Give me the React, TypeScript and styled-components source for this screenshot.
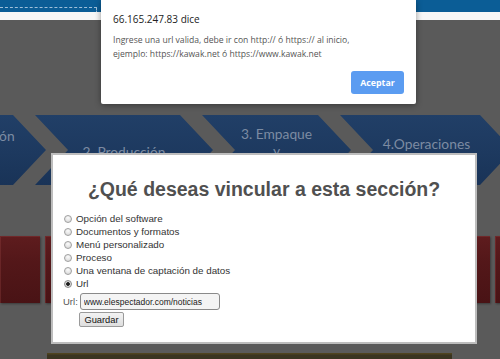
import React from "react";
import styled, { createGlobalStyle } from "styled-components";

const GlobalStyle = createGlobalStyle`
  html, body {
    margin: 0;
    padding: 0;
    background: #5a5a5a;
  }
  body {
    font-family: "Liberation Sans", Arial, sans-serif;
    overflow: hidden;
  }
`;

const Page = styled.div`
  position: relative;
  width: 500px;
  height: 359px;
  overflow: hidden;
  background: #5a5a5a;
  display: flex;
  flex-direction: column;
`;

const TopBar = styled.div`
  height: 13px;
  box-sizing: border-box;
  padding-top: 7px;
  background: #0b5d96;
  overflow: hidden;
`;

const FocusBox = styled.div`
  width: 97px;
  height: 10px;
  box-sizing: border-box;
  border-top: 1px dashed rgba(210, 225, 240, 0.75);
  border-right: 1px dashed rgba(210, 225, 240, 0.75);
`;

const WhiteStrip = styled.div`
  height: 9px;
  background: #f7f7f7;
`;

const Stage = styled.div`
  display: flex;
  flex-direction: column;
  padding-top: 95px;
`;

const ChevronRow = styled.div`
  display: flex;
  height: 70px;
`;

const Chevron = styled.div<{ $w: number; $pt: number }>`
  flex-shrink: 0;
  width: ${(p) => p.$w}px;
  margin-left: -11px;
  box-sizing: border-box;
  padding-top: ${(p) => p.$pt}px;
  background: linear-gradient(180deg, #213f67 0%, #1d395f 55%, #193357 100%);
  clip-path: polygon(
    0 0,
    calc(100% - 33px) 0,
    100% 50%,
    calc(100% - 33px) 100%,
    0 100%,
    33px 50%
  );
  color: #7c8ba2;
  font-family: Lato, "Open Sans", sans-serif;
  font-size: 13.8px;
  line-height: 17px;
  text-align: center;
  white-space: nowrap;

  &:first-child {
    margin-left: -94px;
  }
`;

const RedRow = styled.div`
  display: flex;
  gap: 5px;
  height: 67px;
  margin-top: 51px;
`;

const RedBlock = styled.div<{ $w: number }>`
  flex-shrink: 0;
  width: ${(p) => p.$w}px;
  background: linear-gradient(180deg, #5e1c1e 0%, #531719 40%, #491315 100%);
  box-shadow: inset 1px 1px 0 rgba(140, 60, 60, 0.4), 1px 1px 2px rgba(0, 0, 0, 0.35);
`;

const BottomBar = styled.div`
  height: 6px;
  width: 405px;
  margin: 50px 0 0 47px;
  background: linear-gradient(180deg, #55481f 0%, #3a3420 40%, #3a3420 100%);
`;

const Alert = styled.div`
  position: absolute;
  left: 101px;
  top: 0;
  width: 315px;
  box-sizing: border-box;
  padding: 12px 12px 10px;
  background: #ffffff;
  box-shadow: 0 1px 6px rgba(0, 0, 0, 0.4);
  border-radius: 0 0 2px 2px;
  font-family: "Open Sans", "Liberation Sans", sans-serif;
  display: flex;
  flex-direction: column;
`;

const AlertTitle = styled.div`
  font-size: 10px;
  line-height: 14px;
  color: #222;
`;

const AlertText = styled.div`
  margin-top: 6.6px;
  font-size: 8.6px;
  line-height: 14px;
  color: #555;
  white-space: nowrap;
`;

const AlertActions = styled.div`
  display: flex;
  justify-content: flex-end;
  margin-top: 10.6px;
`;

const AcceptButton = styled.button`
  width: 53px;
  height: 23px;
  padding: 0;
  border: none;
  border-radius: 3px;
  background: #5b9cf1;
  color: #ffffff;
  font-family: "Open Sans", "Liberation Sans", sans-serif;
  font-weight: 700;
  font-size: 8.8px;
`;

const Modal = styled.div`
  position: absolute;
  left: 51px;
  top: 153px;
  width: 426px;
  height: 191px;
  box-sizing: border-box;
  border: 2px solid #bdbdbd;
  background: #ffffff;
  padding: 23px 0 0 11px;
  display: flex;
  flex-direction: column;
`;

const ModalTitle = styled.h1`
  margin: 0 0 12px -11px;
  font-size: 19.5px;
  line-height: 22px;
  font-weight: 700;
  color: #505050;
  text-align: center;
`;

const Option = styled.label`
  display: flex;
  align-items: center;
  height: 13px;
  font-size: 9.8px;
  line-height: 13px;
  color: #333;
`;

const Radio = styled.input.attrs({ type: "radio" })`
  appearance: none;
  width: 8px;
  height: 8px;
  margin: 0 4px 0 0;
  box-sizing: border-box;
  border-radius: 50%;
  border: 1px solid #a0a0a0;
  background: radial-gradient(circle at 50% 30%, #fbfbfb 0%, #d4d4d4 100%);

  &:checked {
    border-color: #8a8a8a;
    background: radial-gradient(circle, #1c1c1c 0 1.5px, #dcdcdc 2.2px, #cacaca 100%);
  }
`;

const UrlRow = styled.div`
  display: flex;
  align-items: center;
  margin: 3px 0 0 -1px;
  height: 17px;
`;

const UrlLabel = styled.span`
  font-size: 9.5px;
  color: #555;
`;

const UrlInput = styled.input`
  margin-left: 2px;
  width: 140px;
  height: 17px;
  box-sizing: border-box;
  padding: 0 0 0 3px;
  border: 1px solid #8a8a8a;
  border-radius: 3px;
  background: #f4f4f4;
  font-family: "Liberation Sans", Arial, sans-serif;
  font-size: 8.5px;
  color: #1a1a1a;
  outline: none;
`;

const SaveButton = styled.button`
  align-self: flex-start;
  margin: 2px 0 0 15px;
  width: 45px;
  height: 15px;
  padding: 0;
  box-sizing: border-box;
  border: 1px solid #9a9a9a;
  border-radius: 2px;
  background: linear-gradient(180deg, #f3f3f3 0%, #dedede 100%);
  font-family: "Liberation Sans", Arial, sans-serif;
  font-size: 9.3px;
  color: #111;
`;

const chevrons = [
  { w: 140, pt: 11.5, lines: ["1. Recepción"] },
  { w: 178, pt: 27.5, lines: ["2. Producción"] },
  { w: 149, pt: 9.5, lines: ["3. Empaque", "y", "Almacenamiento"] },
  { w: 173, pt: 19.5, lines: ["4.Operaciones"] },
  { w: 150, pt: 19.5, lines: [] as string[] },
];

const redBlocks = [40, 45, 45, 45, 45, 45, 45, 45, 45, 45, 45];

const options = [
  "Opción del software",
  "Documentos y formatos",
  "Menú personalizado",
  "Proceso",
  "Una ventana de captación de datos",
  "Url",
];

export default function App() {
  return (
    <>
      <GlobalStyle />
      <Page>
        <TopBar>
          <FocusBox />
        </TopBar>
        <WhiteStrip />
        <Stage>
          <ChevronRow>
            {chevrons.map((c, i) => (
              <Chevron key={i} $w={c.w} $pt={c.pt}>
                {c.lines.map((l, j) => (
                  <div key={j}>{l}</div>
                ))}
              </Chevron>
            ))}
          </ChevronRow>
          <RedRow>
            {redBlocks.map((w, i) => (
              <RedBlock key={i} $w={w} />
            ))}
          </RedRow>
          <BottomBar />
        </Stage>

        <Modal>
          <ModalTitle>¿Qué deseas vincular a esta sección?</ModalTitle>
          {options.map((o, i) => (
            <Option key={i}>
              <Radio name="tipo" defaultChecked={o === "Url"} />
              {o}
            </Option>
          ))}
          <UrlRow>
            <UrlLabel>Url:</UrlLabel>
            <UrlInput defaultValue="www.elespectador.com/noticias" />
          </UrlRow>
          <SaveButton>Guardar</SaveButton>
        </Modal>

        <Alert>
          <AlertTitle>66.165.247.83 dice</AlertTitle>
          <AlertText>
            Ingrese una url valida, debe ir con http:// ó https:// al inicio,
            <br />
            ejemplo: https://kawak.net ó https://www.kawak.net
          </AlertText>
          <AlertActions>
            <AcceptButton>Aceptar</AcceptButton>
          </AlertActions>
        </Alert>
      </Page>
    </>
  );
}
